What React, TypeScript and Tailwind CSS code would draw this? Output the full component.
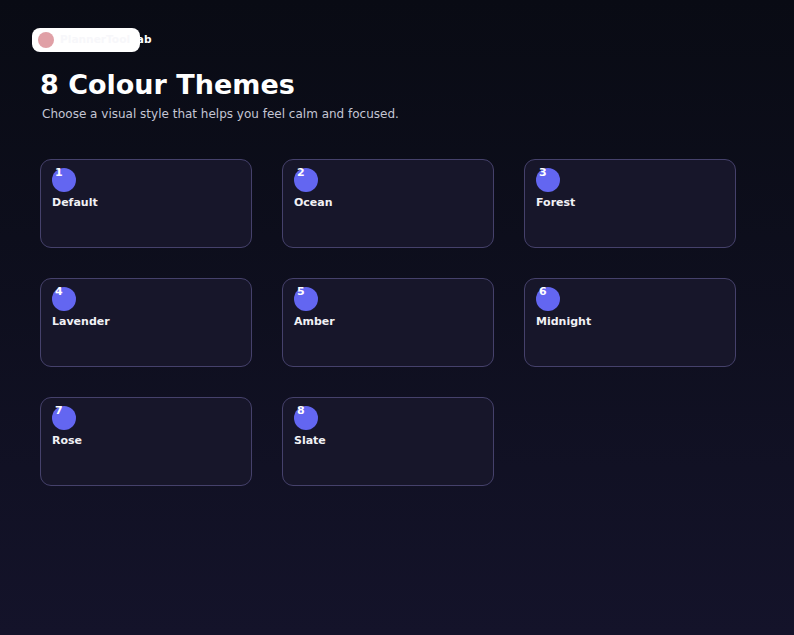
import React from 'react';

const themes = [
  'Default',
  'Ocean',
  'Forest',
  'Lavender',
  'Amber',
  'Midnight',
  'Rose',
  'Slate',
];

function ThemeCard({ index, name }: { index: number; name: string }) {
  return (
    <button className="h-[89px] rounded-[11px] border border-[#45416b] bg-[#17162a] px-[11px] pt-2 text-left flex flex-col items-start">
      <div className="relative w-6 h-6 rounded-full bg-[#6366f1]">
        <span className="absolute left-[3px] top-[-2px] text-[11px] font-bold leading-[14px] text-white">{index}</span>
      </div>
      <span className="mt-[4px] text-[11px] font-bold leading-[14px] text-[#f1f1f5]">{name}</span>
    </button>
  );
}

export default function App() {
  return (
    <div
      className="w-[794px] h-[635px] overflow-hidden bg-gradient-to-b from-[#090b14] to-[#14132a] px-10 pt-7"
      style={{ fontFamily: '"DejaVu Sans", sans-serif' }}
    >
      {/* brand pill */}
      <div className="ml-[-8px] flex items-center w-[108px] h-[24px] rounded-[8px] bg-white pl-[6px] gap-[6px]">
        <span className="w-4 h-4 rounded-full bg-[#e0a0a6] shrink-0" />
        <span className="text-[10.6px] font-bold text-[#f7f7fa] whitespace-nowrap">
          PlannerTool<span className="text-white">Lab</span>
        </span>
      </div>

      <h1 className="mt-[16px] text-[27px] font-bold leading-[34px] text-white">8 Colour Themes</h1>
      <p className="mt-[3px] ml-[2px] text-[12px] leading-[18px] text-[#c4c6d4]">
        Choose a visual style that helps you feel calm and focused.
      </p>

      <div className="mt-[36px] grid grid-cols-[212px_212px_212px] gap-[30px]">
        {themes.map((name, i) => (
          <ThemeCard key={name} index={i + 1} name={name} />
        ))}
      </div>
    </div>
  );
}
